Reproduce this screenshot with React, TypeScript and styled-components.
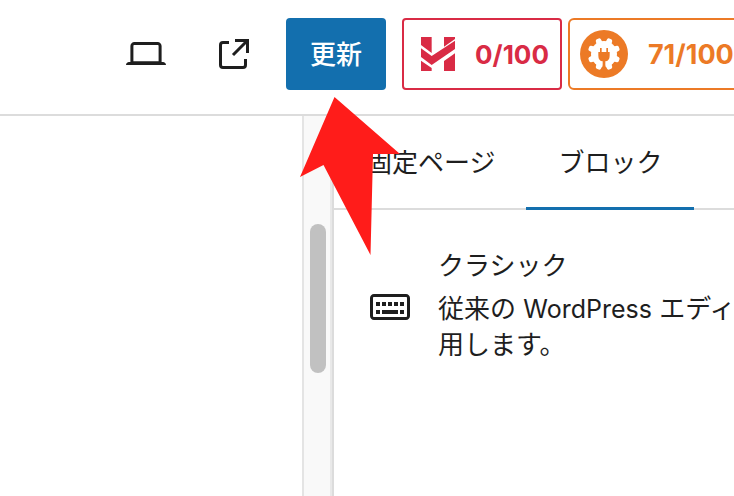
import React from "react";
import styled, { createGlobalStyle } from "styled-components";

const GlobalStyle = createGlobalStyle`
  *, *::before, *::after { box-sizing: border-box; }
  html { background: #fff; }
  body {
    margin: 0;
    color: #1e1e1e;
    font-family: Inter, "Noto Sans CJK JP", sans-serif;
    font-size: 26px;
    line-height: 36px;
  }
  button { font: inherit; color: inherit; }
`;

const Editor = styled.div`
  position: relative;
  display: flex;
  flex-direction: column;
  min-height: 100vh;
  overflow: hidden;
`;

const Header = styled.header`
  display: flex;
  align-items: center;
  padding: 18px 0 24px 122px;
  border-bottom: 2px solid #dcdcdc;
  white-space: nowrap;
`;

const IconButton = styled.button<{ $gap: number }>`
  display: flex;
  flex: none;
  margin-right: ${(p) => p.$gap}px;
  padding: 0;
  border: 0;
  background: none;
`;

const PrimaryButton = styled.button`
  flex: none;
  height: 72px;
  margin-right: 16px;
  padding: 2px 24px 0;
  border: 0;
  border-radius: 4px;
  background: #136fae;
  color: #fff;
  font-weight: 500;
`;

const ScoreButton = styled.button<{ $color: string; $radius: number; $inset: number }>`
  display: flex;
  flex: none;
  align-items: center;
  gap: 20px;
  height: 72px;
  margin-right: 6px;
  padding: 0 11px 0 ${(p) => p.$inset}px;
  border: 2px solid ${(p) => p.$color};
  border-radius: ${(p) => p.$radius}px;
  background: #fff;
  color: ${(p) => p.$color};
`;

const Score = styled.span<{ $size: number }>`
  padding-top: 2px;
  font-size: ${(p) => p.$size}px;
  font-weight: 700;
`;

const Workspace = styled.div`
  display: flex;
  flex: 1;
`;

const Canvas = styled.main`
  flex: 0 0 302px;
`;

const ScrollTrack = styled.div`
  flex: none;
  width: 30px;
  padding: 108px 4px 0 6px;
  border-left: 2px solid #e4e4e4;
  border-right: 2px solid #e9e9e9;
  background: #f9f9f9;
`;

const ScrollThumb = styled.div`
  height: 149px;
  border-radius: 8px;
  background: #c1c1c1;
`;

const Sidebar = styled.aside`
  flex: 1;
  min-width: 0;
  border-left: 2px solid #dcdcdc;
  white-space: nowrap;
`;

const Tabs = styled.div`
  display: flex;
  border-bottom: 2px solid #dcdcdc;
`;

const Tab = styled.button`
  flex: none;
  height: 94px;
  margin-bottom: -2px;
  padding: 0 31px 0 32px;
  border: 0;
  background: none;
  &[aria-selected="true"] { box-shadow: inset 0 -3px 0 #136fae; }
`;

const BlockCard = styled.section`
  display: flex;
  align-items: center;
  gap: 24px;
  padding: 38px 0 0 32px;
`;

const BlockTitle = styled.h2`
  margin: 0 0 7px;
  font-size: 26px;
  font-weight: 400;
  line-height: 36px;
`;

const BlockText = styled.p`
  margin: 0;
`;

const Latin = styled.span`
  font-size: 25px;
  line-height: 1;
`;

const Icon = styled.svg`
  display: block;
  flex: none;
`;

const Pointer = styled.svg`
  position: absolute;
  top: 97px;
  left: 300px;
  pointer-events: none;
`;

const icons = {
  desktop:
    "M20.5 16h-.7V8c0-1.1-.9-2-2-2H6.2c-1.1 0-2 .9-2 2v8h-.7c-.8 0-1.5.7-1.5 1.5h20c0-.8-.7-1.5-1.5-1.5zM5.7 8c0-.3.2-.5.5-.5h11.6c.3 0 .5.2.5.5v7.6H5.7V8z",
  external:
    "M19.5 4.5h-7V6h4.44l-5.97 5.97 1.06 1.06L18 7.06v4.44h1.5v-7Zm-13 1a2 2 0 0 0-2 2v10a2 2 0 0 0 2 2h10a2 2 0 0 0 2-2v-3H17v3a.5.5 0 0 1-.5.5h-10a.5.5 0 0 1-.5-.5v-10a.5.5 0 0 1 .5-.5h3V5.5h-3Z",
  keyboard:
    "M20 6H4c-1.1 0-2 .9-2 2v9c0 1.1.9 2 2 2h16c1.1 0 2-.9 2-2V8c0-1.1-.9-2-2-2zm.5 11c0 .3-.2.5-.5.5H4c-.3 0-.5-.2-.5-.5V8c0-.3.2-.5.5-.5h16c.3 0 .5.2.5.5v9zM10 10H8v2h2v-2zm-5 2h2v-2H5v2zm8-2h-2v2h2v-2zm-5 6h8v-2H8v2zm6-4h2v-2h-2v2zm3 0h2v-2h-2v2zm0 4h2v-2h-2v2zM5 16h2v-2H5v2z",
};

const Glyph = ({ d }: { d: string }) => (
  <Icon width="48" height="48" viewBox="0 0 24 24" fill="#1e1e1e" aria-hidden="true">
    <path d={d} />
  </Icon>
);

const CheckLogo = () => (
  <Icon width="34" height="34" viewBox="0 0 102 102" fill="currentColor" aria-hidden="true">
    <path d="M0 0H32V48L0 24ZM69 0H102V6L69 29ZM0 34L32 57L102 11V36L32 84L0 60ZM0 71L32 93V102H0ZM69 72L102 49V102H69Z" />
  </Icon>
);

const PlugLogo = () => (
  <Icon width="48" height="48" viewBox="-72 -72 144 144" aria-hidden="true">
    <circle r="72" fill="currentColor" />
    <circle r="39" fill="#fff" />
    {[22.5, 67.5, 112.5, 157.5, 202.5, 247.5, 292.5, 337.5].map((angle) => (
      <path
        key={angle}
        d="M-10 -30L-8 -45Q-7 -49 -3 -49H3Q7 -49 8 -45L10 -30Z"
        fill="#fff"
        transform={`rotate(${angle})`}
      />
    ))}
    <path
      d="M-12 -18H-7V-6H7V-18H12V-6H17V5C17 16 12 21 4 22V33L7 49H-7L-4 33V22C-12 21 -17 16 -17 5V-6H-12Z"
      fill="currentColor"
    />
  </Icon>
);

export default function App() {
  return (
    <>
      <GlobalStyle />
      <Editor>
        <Header>
          <IconButton type="button" aria-label="desktop" $gap={40}>
            <Glyph d={icons.desktop} />
          </IconButton>
          <IconButton type="button" aria-label="external" $gap={28}>
            <Glyph d={icons.external} />
          </IconButton>
          <PrimaryButton type="button">更新</PrimaryButton>
          <ScoreButton type="button" $color="#d92b45" $radius={4} $inset={17}>
            <CheckLogo />
            <Score $size={26}>0/100</Score>
          </ScoreButton>
          <ScoreButton type="button" $color="#ec7a26" $radius={6} $inset={10}>
            <PlugLogo />
            <Score $size={27}>71/100</Score>
          </ScoreButton>
        </Header>
        <Workspace>
          <Canvas />
          <ScrollTrack>
            <ScrollThumb />
          </ScrollTrack>
          <Sidebar>
            <Tabs role="tablist">
              <Tab type="button" role="tab" aria-selected="false">固定ページ</Tab>
              <Tab type="button" role="tab" aria-selected="true">ブロック</Tab>
            </Tabs>
            <BlockCard>
              <Glyph d={icons.keyboard} />
              <div>
                <BlockTitle>クラシック</BlockTitle>
                <BlockText>
                  従来の <Latin>WordPress</Latin> エディ
                  <br />
                  用します。
                </BlockText>
              </div>
            </BlockCard>
          </Sidebar>
        </Workspace>
        <Pointer width="100" height="158" viewBox="0 0 100 158" aria-hidden="true">
          <path d="M34.5 0L100 57H73L70.5 158L23.5 68L0 80Z" fill="#ff1c1a" />
        </Pointer>
      </Editor>
    </>
  );
}
